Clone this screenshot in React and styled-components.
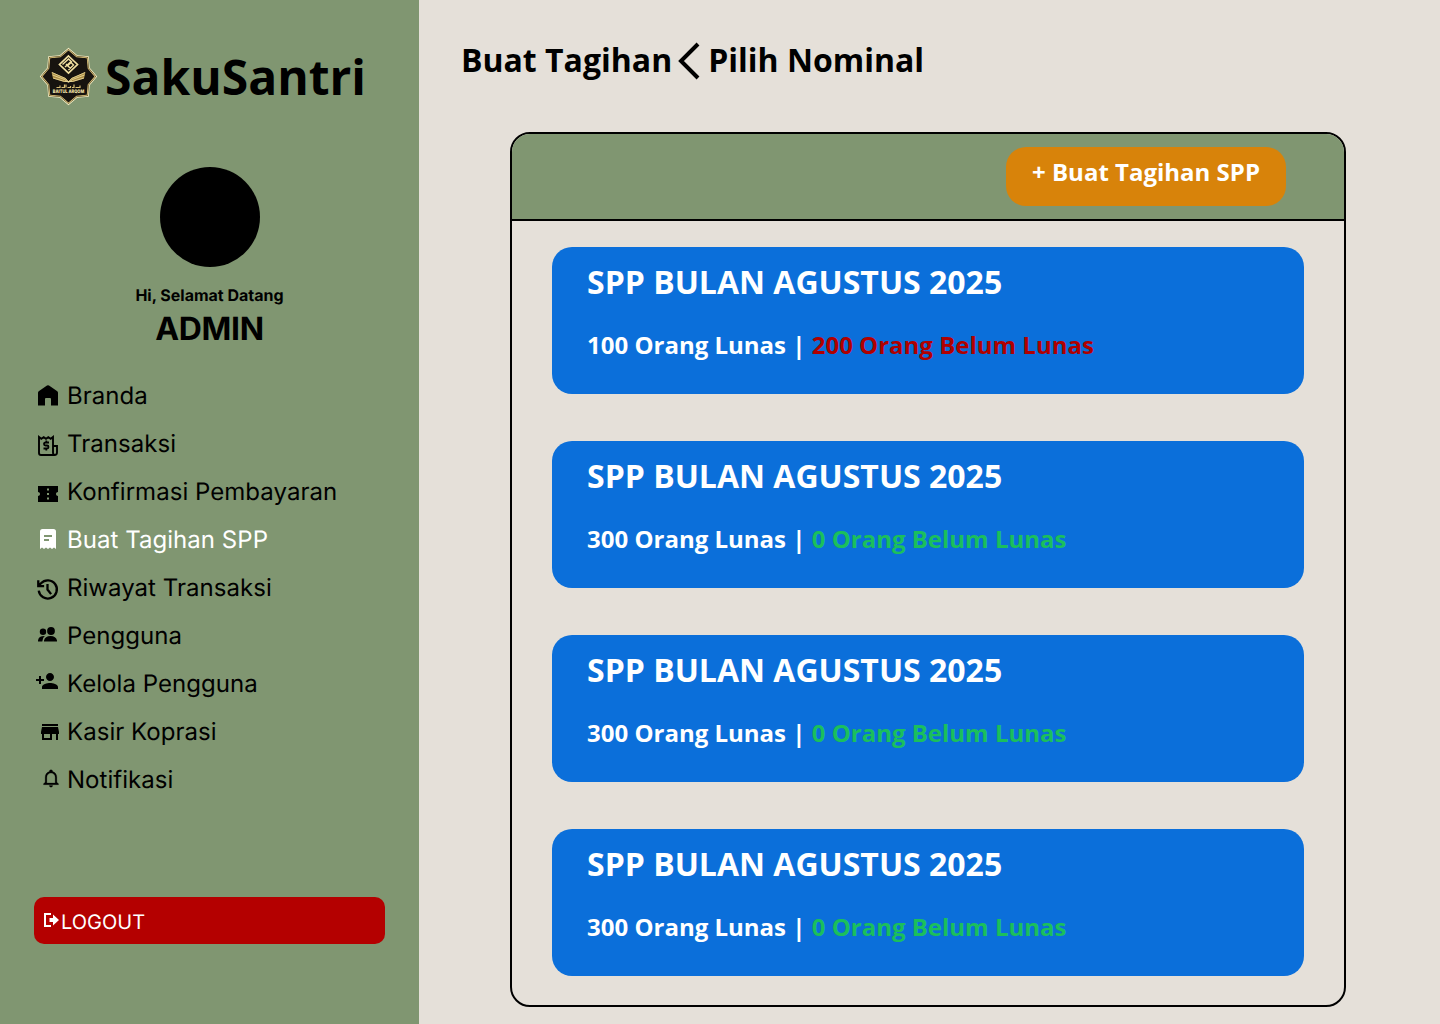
import React from "react";
import styled, { createGlobalStyle } from "styled-components";

const Global = createGlobalStyle`
  *, *::before, *::after { box-sizing: border-box; }
  body { margin: 0; background: #e5e0d9; color: #000; }
`;

const Page = styled.div`
  display: flex;
  width: 1440px;
  height: 1024px;
  overflow: hidden;
  background: #e5e0d9;
  font-family: "Open Sans", "Noto Sans", sans-serif;
`;

const Sidebar = styled.aside`
  display: flex;
  flex-direction: column;
  flex: 0 0 419px;
  padding: 44px 34px 0;
  background: #809671;
  font-family: Inter, "Liberation Sans", sans-serif;
  text-rendering: geometricPrecision;
`;

const Brand = styled.div`
  display: flex;
  align-items: center;
  gap: 8px;
  height: 65px;
  padding-left: 5px;
`;

const BrandName = styled.span`
  font: 700 48px/65px "Open Sans", "Noto Sans", sans-serif;
  text-rendering: auto;
  white-space: nowrap;
`;

const Profile = styled.div`
  display: flex;
  flex-direction: column;
  align-items: center;
  margin-top: 58px;
`;

const Avatar = styled.div`
  width: 100px;
  height: 100px;
  border-radius: 50%;
  background: #000;
`;

const Greeting = styled.span`
  margin-top: 19px;
  font-size: 16px;
  line-height: 19px;
  font-weight: 700;
`;

const Role = styled.strong`
  margin-top: 4px;
  font-size: 32px;
  line-height: 39px;
  font-weight: 700;
  letter-spacing: -0.3px;
`;

const Menu = styled.nav`
  display: flex;
  flex-direction: column;
  margin-top: 24px;
`;

const MenuItem = styled.a`
  display: flex;
  height: 48px;
  color: ${(p) => (p.$active ? "#fff" : "#000")};
  font-size: 24px;
  font-weight: 430;
  letter-spacing: 0.04px;
  line-height: 48px;
  white-space: nowrap;
`;

const IconSlot = styled.span`
  display: flex;
  flex: 0 0 33px;
  height: 48px;
  padding: ${(p) => p.$top}px 0 0 ${(p) => p.$left}px;
`;

const Glyph = styled.svg`
  display: block;
  flex: none;
  overflow: visible;
`;

const Logout = styled.button`
  display: flex;
  align-items: center;
  width: 351px;
  height: 47px;
  margin-top: 93px;
  padding: 2px 0 0 10px;
  border: 0;
  border-radius: 10px;
  background: #b40000;
  color: #fff;
  font: 400 20px/24px Inter, "Liberation Sans", sans-serif;
  text-rendering: geometricPrecision;
  gap: 2px;
`;

const Main = styled.main`
  flex: 1;
  padding: 38px 0 0 42px;
`;

const Crumbs = styled.h1`
  display: flex;
  align-items: center;
  height: 44px;
  margin: 0;
  font-size: 32px;
  line-height: 44px;
  font-weight: 700;
  white-space: nowrap;
`;

const Chevron = styled(Glyph)`
  margin: 1px 9px 0 7px;
`;

const Panel = styled.section`
  width: 836px;
  height: 875px;
  margin: 50px 0 0 49px;
  border: 2px solid #000;
  border-radius: 20px;
  overflow: hidden;
`;

const PanelHeader = styled.header`
  display: flex;
  justify-content: flex-end;
  height: 87px;
  padding: 13px 58px 0 0;
  border-bottom: 2px solid #000;
  background: #809671;
`;

const CreateButton = styled.button`
  width: 280px;
  height: 59px;
  padding: 0 0 10px;
  border: 0;
  border-radius: 20px;
  background: #d8830a;
  color: #fff;
  font: 700 24px/33px "Open Sans", "Noto Sans", sans-serif;
  white-space: nowrap;
`;

const Bills = styled.div`
  display: flex;
  flex-direction: column;
  gap: 47px;
  padding: 26px 40px 0;
`;

const Bill = styled.article`
  height: 147px;
  padding: 13px 35px;
  border-radius: 20px;
  background: #0b6fda;
  color: #fff;
  font-weight: 700;
`;

const BillTitle = styled.h2`
  margin: 0;
  font-size: 32px;
  line-height: 44px;
`;

const BillStatus = styled.p`
  margin: 24px 0 0;
  font-size: 24px;
  line-height: 33px;
`;

const Unpaid = styled.span`
  color: ${(p) => (p.$settled ? "#1bbf5c" : "#b00000")};
`;

const star = (r1, r2) =>
  Array.from({ length: 16 }, (_, i) => {
    const r = i % 2 ? r2 : r1;
    const a = (i * Math.PI) / 8;
    return `${(29.5 + r * Math.sin(a)).toFixed(2)},${(28.5 - r * Math.cos(a)).toFixed(2)}`;
  }).join(" ");

const Logo = () => (
  <Glyph width="58" height="58" viewBox="0 0 58 58">
    <polygon points={star(28.7, 23)} fill="#f7efc4" />
    <polygon points={star(27.6, 22.1)} fill="#4a3b18" />
    <polygon points={star(27, 21.6)} fill="#e2c87c" />
    <polygon points={star(25.9, 20.8)} fill="#17130f" />
    <g fill="none" stroke="#f0dfa0" transform="translate(.5 -.5)">
      <path d="M29 8.500 38 17 29 25.500 20 17Z" strokeWidth="1.700" />
      <path d="M23 17 29 11.500 32.500 14.800M25.500 19.500 31 14.500M26.500 16.500l4.500 4.500M29 22.500l5-5-2.500-2.500-3 3" strokeWidth="1.400" />
    </g>
    <path d="M12.500 24 26.500 30 29.500 33.500 32.500 30 46.500 24 45 30.500 33.500 34H25.500L14 30.500Z" fill="#a98b45" />
    <path d="M13 24.500 26.500 30.500l3 3.500 3-3.500 13.500-6M13.500 27l12 4.500 4 3 4-3 12-4.500M14 30 25.500 33.500h8l11.500-3.500" fill="none" stroke="#f0dfa0" strokeWidth=".8" />
    <path d="M17.500 39.500h3.500v-2m1.500 2h3v-3m1.500 3v-3m1.500 3h3v-1.500m1.500 1.500h2v-3m1.500 3h4.500v-2" fill="none" stroke="#d7bd74" strokeWidth="1.200" />
    <text x="29.5" y="44.8" textAnchor="middle" textLength="31.5" lengthAdjust="spacingAndGlyphs" fill="#f7e9ad" fontFamily="Inter, sans-serif" fontSize="4.8" fontWeight="800">BAITUL ARQOM</text>
  </Glyph>
);

const Icon = ({ size = 24, children }) => (
  <Glyph width={size} height={size} viewBox="0 0 24 24" fill="currentColor">
    {children}
  </Glyph>
);

const menu = [
  { label: "Branda", left: 2, top: 12, icon: <Icon><path d="M2 21.500V8.700Q2 7.700 2.700 7.200L11 1.500Q12 .8 13 1.500L21.300 7.200Q22 7.700 22 8.700V21.500H15V15Q15 14 14 14H10Q9 14 9 15V21.500Z" /></Icon> },
  { label: "Transaksi", left: 2, top: 14, icon: (
    <Icon>
      <g fill="none" stroke="currentColor" strokeWidth="1.900">
        <path d="M17 12H21V18.500Q21 21 18.500 21H5Q3 21 3 19V3L5.300 4.800 7.700 3.200 10 4.800 12.300 3.200 14.700 4.800 17 3V18.500Q17 21 19 21" />
        <path d="M13 8.500H9.500Q8 8.500 8 10T9.500 11.500H11Q12.500 11.500 12.500 13T11 14.500H7.500M10.300 6.500V8.500M10.300 14.500V16.500" strokeWidth="1.800" />
      </g>
    </Icon>
  ) },
  { label: "Konfirmasi Pembayaran", left: 2, top: 14, icon: <Icon><path d="M22 10V4H2v6c1.100 0 2 .9 2 2s-.9 2-2 2v6h20v-6c-1.100 0-2-.9-2-2s.9-2 2-2zm-9 7.500h-2v-2h2zm0-4.500h-2v-2h2zm0-4.500h-2v-2h2z" /></Icon> },
  { label: "Buat Tagihan SPP", active: true, left: 2, top: 11, icon: <Icon><path fillRule="evenodd" d="M6.500 2H17.500Q20 2 20 4.500V22L18 20.500 16 22 14 20.500 12 22 10 20.500 8 22 6 20.500 4 22V4.500Q4 2 6.500 2ZM8 8V10H16V8ZM8 12V14H13V12Z" /></Icon> },
  { label: "Riwayat Transaksi", left: 0, top: 12, icon: (
    <Icon size={27}>
      <path d="M4.200 13A8.100 8.100 0 1 0 6.200 6.500L3.800 9M3.800 3.800V9H9M12 7V12L15.200 16.100" fill="none" stroke="currentColor" strokeWidth="2.050" />
      <path d="M3.500 5 7.500 9H3.500Z" />
    </Icon>
  ) },
  { label: "Pengguna", left: 2, top: 11, icon: (
    <Icon>
      <circle cx="7" cy="8.700" r="3.200" />
      <circle cx="15" cy="8" r="3.900" />
      <path d="M8 18.500V17.500Q9 13 14.500 13T21 17.500V18.500ZM2 18.500V17.500Q2.500 13 8.800 13.100 6.500 14.800 6.300 18.500Z" />
    </Icon>
  ) },
  { label: "Kelola Pengguna", left: 1, top: 9, icon: <Icon><path d="M15 12c2.210 0 4-1.790 4-4s-1.790-4-4-4-4 1.790-4 4 1.790 4 4 4zm-9-2V7H4v3H1v2h3v3h2v-3h3v-2H6zm9 4c-2.670 0-8 1.340-8 4v2h16v-2c0-2.660-5.330-4-8-4z" /></Icon> },
  { label: "Kasir Koprasi", left: 4, top: 12, icon: <Icon><path d="M20 4H4v2h16V4zm1 10v-2l-1-5H4l-1 5v2h1v6h10v-6h4v6h2v-6h1zm-9 4H6v-4h6v4z" /></Icon> },
  { label: "Notifikasi", left: 7, top: 12, icon: <Icon size={20}><path d="M10 21h4c0 1.100-.9 2-2 2s-2-.9-2-2m11-2v1H3v-1l2-2v-6c0-3.100 2-5.800 5-6.700V4c0-1.100.9-2 2-2s2 .9 2 2v.3c3 .9 5 3.600 5 6.700v6l2 2m-4-8c0-2.800-2.200-5-5-5s-5 2.200-5 5v7h10v-7z" stroke="currentColor" strokeWidth=".3" /></Icon> },
];

const bills = [
  { paid: 100, unpaid: 200 },
  { paid: 300, unpaid: 0 },
  { paid: 300, unpaid: 0 },
  { paid: 300, unpaid: 0 },
];

export default function App() {
  return (
    <Page>
      <Global />
      <Sidebar>
        <Brand>
          <Logo />
          <BrandName>SakuSantri</BrandName>
        </Brand>
        <Profile>
          <Avatar />
          <Greeting>Hi, Selamat Datang</Greeting>
          <Role>ADMIN</Role>
        </Profile>
        <Menu>
          {menu.map((m) => (
            <MenuItem key={m.label} $active={m.active}>
              <IconSlot $left={m.left} $top={m.top}>{m.icon}</IconSlot>
              {m.label}
            </MenuItem>
          ))}
        </Menu>
        <Logout>
          <Glyph width="15" height="20" viewBox="0 0 15 20" fill="currentColor">
            <path d="M0 1H7V3H2V13H7V15H0ZM5.500 6H9V2.500L15 8 9 13.500V10H5.500Z" />
          </Glyph>
          LOGOUT
        </Logout>
      </Sidebar>
      <Main>
        <Crumbs>
          Buat Tagihan
          <Chevron width="20" height="38" viewBox="0 0 20 38" fill="none" stroke="#000" strokeWidth="4">
            <path d="M19 2 2 19 19 36" />
          </Chevron>
          Pilih Nominal
        </Crumbs>
        <Panel>
          <PanelHeader>
            <CreateButton>+ Buat Tagihan SPP</CreateButton>
          </PanelHeader>
          <Bills>
            {bills.map((b, i) => (
              <Bill key={i}>
                <BillTitle>SPP BULAN AGUSTUS 2025</BillTitle>
                <BillStatus>
                  {b.paid} Orang Lunas | <Unpaid $settled={b.unpaid === 0}>{b.unpaid} Orang Belum Lunas</Unpaid>
                </BillStatus>
              </Bill>
            ))}
          </Bills>
        </Panel>
      </Main>
    </Page>
  );
}
